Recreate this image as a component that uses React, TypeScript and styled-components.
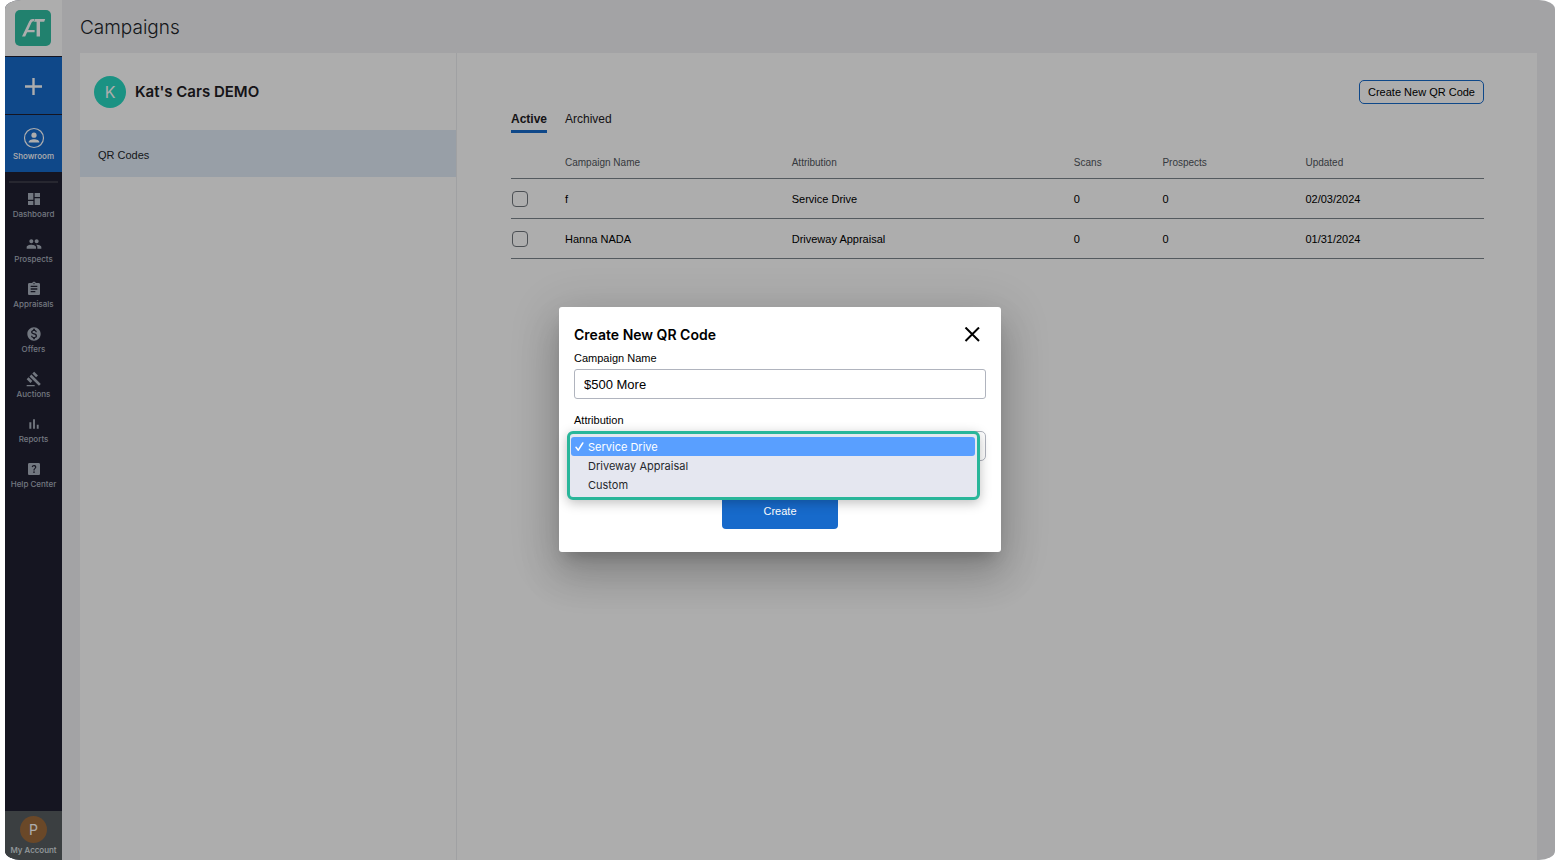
import React, { useState } from "react";
import styled, { createGlobalStyle } from "styled-components";
import {
  MdAssignment,
  MdDashboard,
  MdGavel,
  MdHelpCenter,
  MdMonetizationOn,
  MdPeople,
} from "react-icons/md";

const color = {
  blue: "#176acb",
  green: "#29b69a",
  navy: "#202032",
  page: "#f0f1f4",
  line: "#7d858d",
};

const font = {
  text: `"Liberation Sans", Arial, sans-serif`,
  display: `Inter, "Liberation Sans", sans-serif`,
};

const GlobalStyle = createGlobalStyle`
  *, *::before, *::after { box-sizing: border-box; }
  body {
    margin: 0;
    background: #fff;
    color: #000;
    font-family: ${font.text};
    font-size: 11px;
    line-height: 18px;
  }
  button, input, select { font: inherit; color: inherit; margin: 0; }
  button { cursor: pointer; }
`;

const Frame = styled.div`
  position: relative;
  display: flex;
  min-height: 100vh;
  margin: 0 5px;
  border-radius: 16px / 9px;
  overflow: hidden;
  background: ${color.page};
`;

const Sidebar = styled.nav`
  display: flex;
  flex-direction: column;
  flex: none;
  width: 57px;
  background: ${color.navy};
  font-family: ${font.display};
`;

const LogoLink = styled.a`
  display: flex;
  align-items: center;
  justify-content: center;
  height: 56px;
  padding-right: 1px;
  background: #fff;
`;

const SideAction = styled.button`
  display: flex;
  flex-direction: column;
  align-items: center;
  justify-content: center;
  gap: 1px;
  height: 57px;
  margin-top: 1px;
  padding: 2px 0 0;
  border: 0;
  background: ${color.blue};
  color: #fff;
  font-size: 8px;
  font-weight: 500;
  line-height: 12px;
`;

const SideList = styled.ul`
  list-style: none;
  margin: 9px 4px 0;
  padding: 8px 0 0;
  border-top: 2px solid #3a3a48;
`;

const SideLink = styled.a`
  display: flex;
  flex-direction: column;
  align-items: center;
  height: 45px;
  color: #a9b0bd;
  font-size: 8px;
  font-weight: 500;
  line-height: 14px;
  text-decoration: none;
  white-space: nowrap;

  svg { display: block; width: 16px; height: 16px; }
`;

const Account = styled.button`
  display: flex;
  flex-direction: column;
  align-items: center;
  height: 49px;
  margin-top: auto;
  padding: 5px 0 0;
  border: 0;
  background: #575e61;
  color: #dfe2e6;
  font-size: 8px;
  font-weight: 500;
  line-height: 14px;
`;

const Avatar = styled.span<{ $size: number; $bg: string }>`
  display: flex;
  align-items: center;
  justify-content: center;
  flex: none;
  width: ${(p) => p.$size}px;
  height: ${(p) => p.$size}px;
  border-radius: 50%;
  background: ${(p) => p.$bg};
  color: #fff;
  font-family: ${font.display};
  font-size: ${(p) => Math.round(p.$size / 2)}px;
  font-weight: 400;
`;

const Main = styled.main`
  display: flex;
  flex-direction: column;
  flex: 1;
  min-width: 0;
  padding: 0 18px;
`;

const PageTitle = styled.h1`
  margin: 0;
  height: 53px;
  color: #22252a;
  font-family: ${font.display};
  font-size: 19px;
  font-weight: 300;
  line-height: 55px;
`;

const Panels = styled.div`
  display: flex;
  flex: 1;
  background: #fff;
`;

const DealerPanel = styled.aside`
  flex: none;
  width: 26%;
  max-width: 377px;
  border-right: 1px solid #eceef0;
`;

const Dealer = styled.div`
  display: flex;
  align-items: center;
  gap: 9px;
  height: 77px;
  padding: 0 14px;
`;

const DealerName = styled.h2`
  margin: 0;
  color: #1e2024;
  font-family: ${font.display};
  font-size: 15px;
  font-weight: 600;
`;

const DealerLink = styled.a`
  display: flex;
  align-items: center;
  height: 47px;
  padding: 3px 18px 0;
  background: #e0ebf6;
  color: #22252a;
  text-decoration: none;
`;

const Campaigns = styled.section`
  display: flex;
  flex-direction: column;
  flex: 1;
  min-width: 0;
  padding: 27px 53px 27px 54px;
`;

const OutlineButton = styled.button`
  align-self: flex-end;
  height: 24px;
  padding: 0 8px;
  border: 1px solid ${color.blue};
  border-radius: 5px;
  background: #fff;
`;

const Tabs = styled.div`
  display: flex;
  gap: 18px;
  margin-top: 6px;
`;

const Tab = styled.button<{ $active: boolean }>`
  height: 23px;
  padding: 0 0 2px;
  border: 0;
  border-bottom: 3px solid ${(p) => (p.$active ? color.blue : "transparent")};
  background: none;
  color: #1e2024;
  font-size: 12px;
  font-weight: ${(p) => (p.$active ? 600 : 400)};
`;

const Table = styled.table`
  width: 100%;
  margin-top: 15px;
  table-layout: fixed;
  border-collapse: collapse;
  text-align: left;

  th, td { padding: 0; border-bottom: 1px solid ${color.line}; }
  th { height: 30px; color: #50555c; font-size: 10px; font-weight: 400; }
  td { height: 40px; padding-top: 1px; }
`;

const HeadCell = styled.th<{ $width: string }>`
  width: ${(p) => p.$width};
`;

const CheckBox = styled.input`
  appearance: none;
  display: block;
  width: 16px;
  height: 16px;
  margin: 0 0 0 1px;
  border: 1px solid #70767d;
  border-radius: 4px;
  &:checked { background: ${color.blue}; }
`;

const Backdrop = styled.div`
  position: absolute;
  inset: 0;
  display: flex;
  align-items: center;
  justify-content: center;
  padding-bottom: 1px;
  background: rgba(0, 0, 0, 0.32);
`;

const Dialog = styled.form`
  width: 442px;
  padding: 18px 15px 23px;
  border-radius: 3px;
  background: #fff;
  box-shadow: 0 11px 15px -7px rgba(0, 0, 0, 0.2), 0 24px 38px 3px rgba(0, 0, 0, 0.14),
    0 9px 46px 8px rgba(0, 0, 0, 0.12);
`;

const DialogHead = styled.header`
  display: flex;
  align-items: center;
  justify-content: space-between;
  height: 20px;
  margin-bottom: 4px;
  padding-right: 6px;
`;

const DialogTitle = styled.h2`
  margin: 0;
  font-family: ${font.display};
  font-size: 14px;
  font-weight: 600;
`;

const CloseButton = styled.button`
  display: flex;
  padding: 0;
  border: 0;
  background: none;
`;

const Label = styled.label`
  display: block;
  margin-bottom: 2px;
`;

const TextInput = styled.input`
  display: block;
  width: 100%;
  height: 30px;
  margin-bottom: 12px;
  padding: 0 9px;
  border: 1px solid #b0b4be;
  border-radius: 3px;
  font-size: 13px;
`;

const SelectWrap = styled.div`
  position: relative;
  margin-bottom: 32px;
`;

const Select = styled.select`
  appearance: none;
  display: block;
  width: 100%;
  height: 30px;
  padding: 0 9px;
  border: 1px solid #b0b4be;
  border-radius: 5px;
  background: #fff;
`;

const Menu = styled.div`
  position: absolute;
  top: 0;
  left: -7px;
  right: 6px;
  padding: 3px 2px 3px 1px;
  border: 3px solid ${color.green};
  border-radius: 6px;
  background: #e5e7f0;
  box-shadow: 0 3px 12px rgba(0, 0, 0, 0.25);
  font-family: ${font.display};
`;

const MenuItem = styled.button<{ $selected: boolean }>`
  display: flex;
  align-items: center;
  width: 100%;
  height: 19px;
  padding: 0 4px;
  border: 0;
  border-radius: 3px;
  background: ${(p) => (p.$selected ? "#599fff" : "transparent")};
  color: ${(p) => (p.$selected ? "#fff" : "#26282d")};
`;

const Tick = styled.span`
  display: flex;
  width: 13px;
`;

const CreateButton = styled.button`
  display: block;
  width: 116px;
  height: 36px;
  margin: 0 auto;
  padding: 0;
  border: 0;
  border-radius: 4px;
  background: ${color.blue};
  color: #fff;
`;

const Logo = () => (
  <svg width="36" height="36" viewBox="0 0 36 36" aria-hidden="true">
    <rect width="36" height="36" rx="5" fill="#31bea2" />
    <g fill="#fff">
      <path d="M7 26.600L14.300 11.200Q15.300 9 17.600 9H19.600L18.600 11.400H18Q17 11.400 16.600 12.400L10.200 26.600Z" />
      <path d="M12 20H19.600V22.200H11Z" />
      <path d="M20 9H30.200L29.200 11.700H25V26.600H21.600V11.700H19Z" />
    </g>
  </svg>
);

const ReportsIcon = () => (
  <svg viewBox="0 0 24 24" fill="currentColor" aria-hidden="true">
    <path d="M5 9.200h3V19H5zM10.600 5h2.800v14h-2.800zm5.600 8H19v6h-2.800z" />
  </svg>
);

const PersonIcon = () => (
  <svg width="22" height="22" viewBox="0 0 22 22" aria-hidden="true">
    <circle cx="11" cy="11" r="9.500" fill="none" stroke="currentColor" strokeWidth="1.200" />
    <circle cx="11" cy="8.200" r="2.600" fill="currentColor" />
    <path d="M5.600 15.600c0-2.400 2.800-3.400 5.400-3.400s5.400 1 5.400 3.400z" fill="currentColor" />
  </svg>
);

const PlusIcon = () => (
  <svg width="18" height="18" viewBox="0 0 18 18" aria-hidden="true">
    <path d="M8.500 0v17M0 8.500h17" stroke="currentColor" strokeWidth="2.400" />
  </svg>
);

const CloseIcon = () => (
  <svg width="16" height="16" viewBox="0 0 16 16" aria-hidden="true">
    <path d="M1.500 .5l13.500 13.500M15 .5L1.500 14" stroke="#000" strokeWidth="2" />
  </svg>
);

const CheckIcon = () => (
  <svg width="9" height="9" viewBox="0 0 9 9" aria-hidden="true">
    <path
      d="M1 5.300l2.300 2.900L7.800 1"
      fill="none"
      stroke="currentColor"
      strokeWidth="1.500"
      strokeLinecap="round"
      strokeLinejoin="round"
    />
  </svg>
);

const navItems = [
  { label: "Dashboard", Icon: MdDashboard },
  { label: "Prospects", Icon: MdPeople },
  { label: "Appraisals", Icon: MdAssignment },
  { label: "Offers", Icon: MdMonetizationOn },
  { label: "Auctions", Icon: MdGavel },
  { label: "Reports", Icon: ReportsIcon },
  { label: "Help Center", Icon: MdHelpCenter },
];

const columns = [
  { label: "Campaign Name", width: "23.3%" },
  { label: "Attribution", width: "29%" },
  { label: "Scans", width: "9.1%" },
  { label: "Prospects", width: "14.7%" },
  { label: "Updated", width: "auto" },
];

const rows = [
  ["f", "Service Drive", "0", "0", "02/03/2024"],
  ["Hanna NADA", "Driveway Appraisal", "0", "0", "01/31/2024"],
];

const attributions = ["Service Drive", "Driveway Appraisal", "Custom"];

export default function App() {
  const [tab, setTab] = useState("Active");
  const [name, setName] = useState("$500 More");
  const [attribution, setAttribution] = useState(attributions[0]);

  return (
    <>
      <GlobalStyle />
      <Frame>
        <Sidebar>
          <LogoLink href="#" aria-label="Home">
            <Logo />
          </LogoLink>
          <SideAction type="button" aria-label="Add">
            <PlusIcon />
          </SideAction>
          <SideAction type="button">
            <PersonIcon />
            Showroom
          </SideAction>
          <SideList>
            {navItems.map(({ label, Icon }) => (
              <li key={label}>
                <SideLink href="#">
                  <Icon />
                  {label}
                </SideLink>
              </li>
            ))}
          </SideList>
          <Account type="button">
            <Avatar $size={27} $bg="#9d6a3c">P</Avatar>
            My Account
          </Account>
        </Sidebar>

        <Main>
          <PageTitle>Campaigns</PageTitle>
          <Panels>
            <DealerPanel>
              <Dealer>
                <Avatar $size={32} $bg="#29d8c2">K</Avatar>
                <DealerName>Kat's Cars DEMO</DealerName>
              </Dealer>
              <DealerLink href="#">QR Codes</DealerLink>
            </DealerPanel>

            <Campaigns>
              <OutlineButton type="button">Create New QR Code</OutlineButton>
              <Tabs role="tablist">
                {["Active", "Archived"].map((t) => (
                  <Tab
                    key={t}
                    type="button"
                    role="tab"
                    aria-selected={tab === t}
                    $active={tab === t}
                    onClick={() => setTab(t)}
                  >
                    {t}
                  </Tab>
                ))}
              </Tabs>
              <Table>
                <thead>
                  <tr>
                    <HeadCell $width="54px" aria-label="Select" />
                    {columns.map((c) => (
                      <HeadCell key={c.label} scope="col" $width={c.width}>
                        {c.label}
                      </HeadCell>
                    ))}
                  </tr>
                </thead>
                <tbody>
                  {rows.map((row) => (
                    <tr key={row[0]}>
                      <td>
                        <CheckBox type="checkbox" aria-label={`Select ${row[0]}`} />
                      </td>
                      {row.map((cell, i) => (
                        <td key={i}>{cell}</td>
                      ))}
                    </tr>
                  ))}
                </tbody>
              </Table>
            </Campaigns>
          </Panels>
        </Main>

        <Backdrop>
          <Dialog
            role="dialog"
            aria-labelledby="dialog-title"
            onSubmit={(e: React.FormEvent) => e.preventDefault()}
          >
            <DialogHead>
              <DialogTitle id="dialog-title">Create New QR Code</DialogTitle>
              <CloseButton type="button" aria-label="Close">
                <CloseIcon />
              </CloseButton>
            </DialogHead>
            <Label htmlFor="campaign-name">Campaign Name</Label>
            <TextInput
              id="campaign-name"
              type="text"
              value={name}
              onChange={(e) => setName(e.target.value)}
            />
            <Label htmlFor="attribution">Attribution</Label>
            <SelectWrap>
              <Select
                id="attribution"
                value={attribution}
                onChange={(e) => setAttribution(e.target.value)}
              >
                {attributions.map((a) => (
                  <option key={a}>{a}</option>
                ))}
              </Select>
              <Menu role="listbox" aria-label="Attribution">
                {attributions.map((a) => (
                  <MenuItem
                    key={a}
                    type="button"
                    role="option"
                    aria-selected={a === attribution}
                    $selected={a === attribution}
                    onClick={() => setAttribution(a)}
                  >
                    <Tick>{a === attribution && <CheckIcon />}</Tick>
                    {a}
                  </MenuItem>
                ))}
              </Menu>
            </SelectWrap>
            <CreateButton type="submit">Create</CreateButton>
          </Dialog>
        </Backdrop>
      </Frame>
    </>
  );
}
